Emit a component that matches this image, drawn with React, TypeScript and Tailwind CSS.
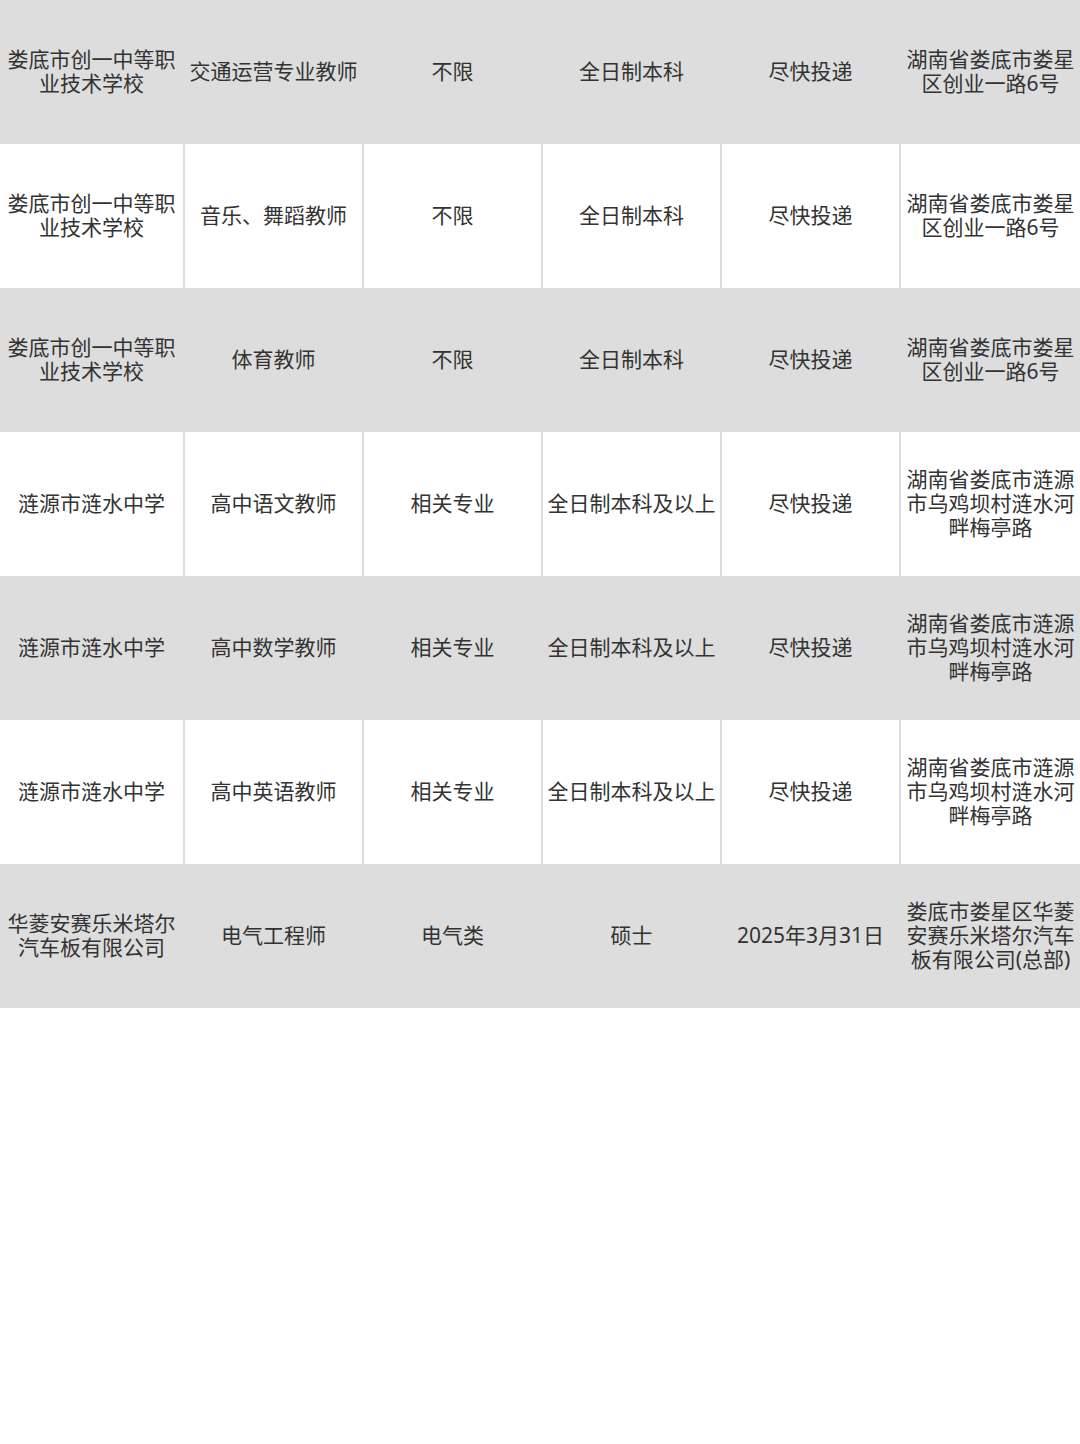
const rows: string[][] = [
  ["娄底市创一中等职业技术学校", "交通运营专业教师", "不限", "全日制本科", "尽快投递", "湖南省娄底市娄星区创业一路6号"],
  ["娄底市创一中等职业技术学校", "音乐、舞蹈教师", "不限", "全日制本科", "尽快投递", "湖南省娄底市娄星区创业一路6号"],
  ["娄底市创一中等职业技术学校", "体育教师", "不限", "全日制本科", "尽快投递", "湖南省娄底市娄星区创业一路6号"],
  ["涟源市涟水中学", "高中语文教师", "相关专业", "全日制本科及以上", "尽快投递", "湖南省娄底市涟源市乌鸡坝村涟水河畔梅亭路"],
  ["涟源市涟水中学", "高中数学教师", "相关专业", "全日制本科及以上", "尽快投递", "湖南省娄底市涟源市乌鸡坝村涟水河畔梅亭路"],
  ["涟源市涟水中学", "高中英语教师", "相关专业", "全日制本科及以上", "尽快投递", "湖南省娄底市涟源市乌鸡坝村涟水河畔梅亭路"],
  ["华菱安赛乐米塔尔汽车板有限公司", "电气工程师", "电气类", "硕士", "2025年3月31日", "娄底市娄星区华菱安赛乐米塔尔汽车板有限公司(总部)"],
]

export default function App() {
  return (
    <div
      className="h-[1444px] w-[1080px] bg-white text-[#333333]"
      style={{ fontFamily: '"Noto Sans", "Noto Sans CJK SC", sans-serif' }}
    >
      {rows.map((row, i) => (
        <div
          key={i}
          className="grid h-[144px] grid-cols-[183px_177px_177px_177px_177px_1fr] gap-x-[2px] bg-[#dddddd]"
        >
          {row.map((cell, j) => (
            <div
              key={j}
              className={
                (i % 2 === 0 ? "bg-[#dddddd]" : "bg-white") +
                " flex items-center justify-center px-1 pb-[3px] text-center text-[21px] leading-[24px]"
              }
            >
              <span>{cell}</span>
            </div>
          ))}
        </div>
      ))}
    </div>
  )
}
